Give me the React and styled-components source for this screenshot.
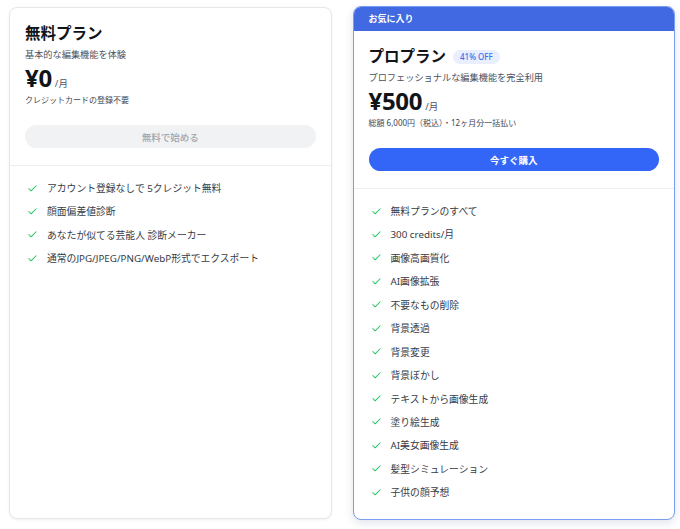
import React from 'react';
import styled, { createGlobalStyle } from 'styled-components';
import { Check } from 'lucide-react';

const GlobalStyle = createGlobalStyle`
  body {
    margin: 0;
    background: #ffffff;
    font-family: "Noto Sans", "Noto Sans CJK JP", sans-serif;
  }
`;

const Page = styled.div`
  display: flex;
  align-items: flex-start;
  gap: 21px;
  padding: 6px 5px 0 9px;
  width: 680px;
  height: 529px;
  box-sizing: border-box;
`;

const Card = styled.div`
  flex: 1;
  display: flex;
  flex-direction: column;
  box-sizing: border-box;
  height: ${p => (p.$featured ? '514px' : '512px')};
  margin-top: ${p => (p.$featured ? '0' : '1px')};
  background: #fff;
  border: 1px solid ${p => (p.$featured ? '#7b9cf4' : '#e6e7ea')};
  border-radius: 8px;
  overflow: hidden;
  box-shadow: ${p => (p.$featured ? '0 3px 8px rgba(40, 60, 120, 0.14)' : '0 1px 3px rgba(0, 0, 0, 0.06)')};
`;

const Ribbon = styled.div`
  height: 25px;
  margin: -1px -1px 0;
  padding: 0 16px;
  display: flex;
  align-items: center;
  background: #4169e1;
  color: #fff;
  font-size: 9px;
  font-weight: 700;
`;

const Head = styled.div`
  padding: 14px 15px 17px 15px;
  border-bottom: 1px solid #eeeff2;
  display: flex;
  flex-direction: column;
`;

const TitleRow = styled.div`
  display: flex;
  align-items: center;
  gap: 7px;
  height: 22px;
`;

const Title = styled.h2`
  margin: 0;
  font-size: 15.5px;
  line-height: 22px;
  font-weight: 700;
  color: #111418;
`;

const Badge = styled.span`
  font-size: 8px;
  line-height: 14px;
  padding: 0 7px;
  border-radius: 999px;
  background: #e9effe;
  color: #3c6df0;
  font-weight: 500;
  margin-top: 1px;
`;

const Subtitle = styled.p`
  margin: 4px 0 0;
  font-size: 9.2px;
  line-height: 14px;
  color: #4b5160;
`;

const PriceRow = styled.div`
  display: flex;
  align-items: baseline;
  gap: 3px;
  margin-top: 2px;
  height: 28px;
`;

const Price = styled.span`
  font-size: 24px;
  line-height: 28px;
  font-weight: 700;
  color: #111418;
  letter-spacing: -0.3px;
`;

const Per = styled.span`
  font-size: 9.5px;
  color: #4b5160;
`;

const Note = styled.p`
  margin: 2px 0 0;
  font-size: 8px;
  line-height: 12px;
  color: #3f4450;
`;

const Button = styled.button`
  margin-top: 19px;
  height: 23px;
  border: none;
  border-radius: 999px;
  font-family: inherit;
  font-size: 9.5px;
  font-weight: ${p => (p.$primary ? 700 : 500)};
  background: ${p => (p.$primary ? '#3366f6' : '#f1f2f4')};
  color: ${p => (p.$primary ? '#ffffff' : '#a0a4ab')};
  cursor: pointer;
`;

const List = styled.ul`
  list-style: none;
  margin: 0;
  padding: 14px 15px 0 15px;
  display: flex;
  flex-direction: column;
  gap: 7.45px;
`;

const Item = styled.li`
  display: flex;
  align-items: center;
  gap: 9px;
  height: 16px;
  padding-left: 2px;
  font-size: 9.8px;
  color: #363b46;
`;

const Tick = styled(Check)`
  color: #22c55e;
  flex-shrink: 0;
`;

const freeFeatures = [
  'アカウント登録なしで 5クレジット無料',
  '顔面偏差値診断',
  'あなたが似てる芸能人 診断メーカー',
  '通常のJPG/JPEG/PNG/WebP形式でエクスポート',
];

const proFeatures = [
  '無料プランのすべて',
  '300 credits/月',
  '画像高画質化',
  'AI画像拡張',
  '不要なもの削除',
  '背景透過',
  '背景変更',
  '背景ぼかし',
  'テキストから画像生成',
  '塗り絵生成',
  'AI美女画像生成',
  '髪型シミュレーション',
  '子供の顔予想',
];

function Features({ items }) {
  return (
    <List>
      {items.map(t => (
        <Item key={t}>
          <Tick size={11} strokeWidth={2.2} />
          {t}
        </Item>
      ))}
    </List>
  );
}

export default function App() {
  return (
    <>
      <GlobalStyle />
      <Page>
        <Card>
          <Head>
            <TitleRow>
              <Title>無料プラン</Title>
            </TitleRow>
            <Subtitle>基本的な編集機能を体験</Subtitle>
            <PriceRow>
              <Price>¥0</Price>
              <Per>/月</Per>
            </PriceRow>
            <Note>クレジットカードの登録不要</Note>
            <Button>無料で始める</Button>
          </Head>
          <Features items={freeFeatures} />
        </Card>
        <Card $featured>
          <Ribbon>お気に入り</Ribbon>
          <Head>
            <TitleRow>
              <Title>プロプラン</Title>
              <Badge>41% OFF</Badge>
            </TitleRow>
            <Subtitle>プロフェッショナルな編集機能を完全利用</Subtitle>
            <PriceRow>
              <Price>¥500</Price>
              <Per>/月</Per>
            </PriceRow>
            <Note>総額 6,000円（税込）・12ヶ月分一括払い</Note>
            <Button $primary>今すぐ購入</Button>
          </Head>
          <Features items={proFeatures} />
        </Card>
      </Page>
    </>
  );
}
